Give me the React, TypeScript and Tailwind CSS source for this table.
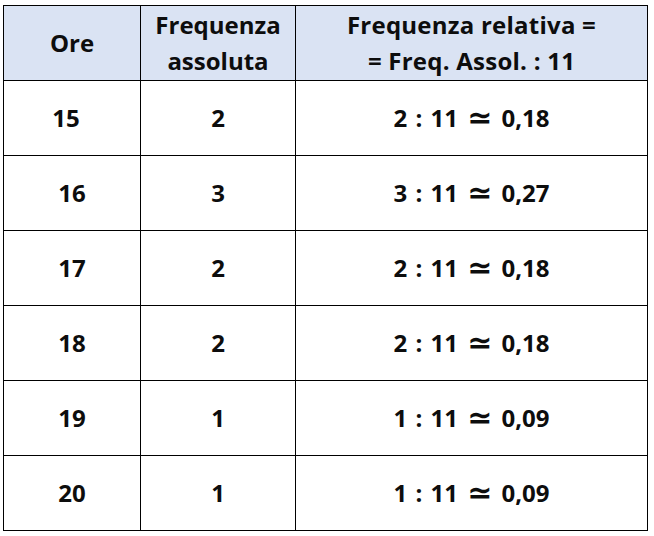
const rows = [
  { ore: '15', ass: '2', val: '0,18', shift: true },
  { ore: '16', ass: '3', val: '0,27' },
  { ore: '17', ass: '2', val: '0,18' },
  { ore: '18', ass: '2', val: '0,18' },
  { ore: '19', ass: '1', val: '0,09' },
  { ore: '20', ass: '1', val: '0,09' },
]

export default function App() {
  return (
    <div
      className="w-[654px] h-[536px] bg-white pl-[3px] pt-[5px] text-[#0d0d0d]"
      style={{ fontFamily: "'Open Sans', 'DejaVu Sans', sans-serif" }}
    >
      <table className="border-collapse table-fixed w-[644px] font-bold text-[24px]">
        <colgroup>
          <col className="w-[137px]" />
          <col className="w-[155px]" />
          <col className="w-[352px]" />
        </colgroup>
        <thead>
          <tr className="h-[75px] bg-[#dae3f3] leading-[36px]">
            <th className="border border-black text-center align-middle p-0">Ore</th>
            <th className="border border-black text-center align-middle p-0">
              Frequenza
              <br />
              assoluta
            </th>
            <th className="border border-black text-center align-middle p-0 tracking-[0.01em]">
              Frequenza relativa =
              <br />= Freq. Assol. : 11
            </th>
          </tr>
        </thead>
        <tbody>
          {rows.map(r => (
            <tr key={r.ore} className="h-[75px]">
              <td className={`border border-black text-center align-middle p-0 ${r.shift ? 'pr-[12px]' : ''}`}>{r.ore}</td>
              <td className="border border-black text-center align-middle p-0">{r.ass}</td>
              <td className="border border-black text-center align-middle p-0 [word-spacing:2px]">
                {r.ass} : 11 <span className="inline-block text-[30px] font-semibold leading-none align-[-1px] mx-[1px]">≃</span> {r.val}
              </td>
            </tr>
          ))}
        </tbody>
      </table>
    </div>
  )
}
